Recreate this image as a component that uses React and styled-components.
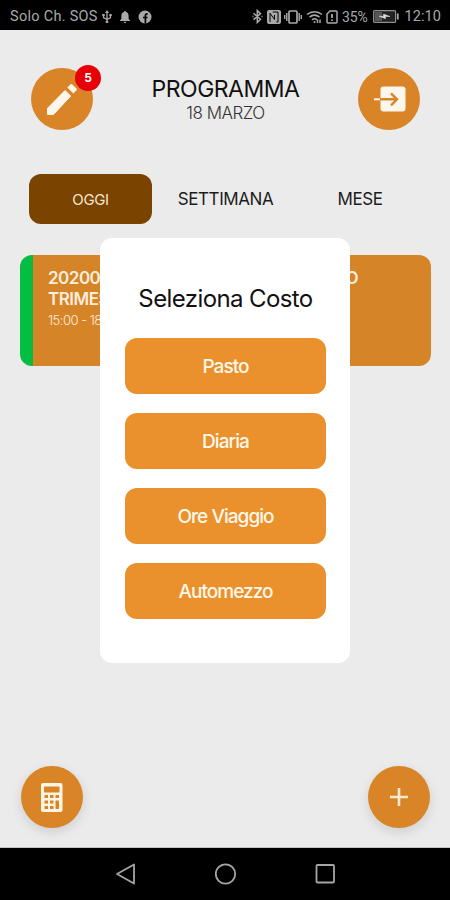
import React from "react";
import styled, { createGlobalStyle } from "styled-components";

const GlobalStyle = createGlobalStyle`
  * {
    box-sizing: border-box;
  }

  body {
    margin: 0;
    background: #000;
    font-family: "Inter", "Liberation Sans", sans-serif;
  }

  button {
    border: 0;
    padding: 0;
    font-family: inherit;
  }
`;

const Phone = styled.div`
  width: 450px;
  height: 900px;
  display: flex;
  flex-direction: column;
  overflow: hidden;
`;

const StatusBar = styled.div`
  flex: 0 0 30px;
  display: flex;
  align-items: center;
  justify-content: space-between;
  padding: 3px 9px 0 10px;
  background: #000;
  color: #a9a9a9;
  font-family: Roboto, sans-serif;
  font-size: 14.5px;
  line-height: 18px;
`;

const StatusGroup = styled.div`
  display: flex;
  align-items: center;

  svg {
    display: block;
    margin-right: ${(props) => props.$gap}px;
  }
`;

const Carrier = styled.span`
  margin-right: 4px;
  letter-spacing: 0.28px;
`;

const Battery = styled.span`
  width: 29px;
  margin-right: 2px;
  font-size: 14px;
  letter-spacing: -0.1px;
`;

const Clock = styled.span`
  margin-left: 2px;
  letter-spacing: 0.1px;
`;

const Screen = styled.main`
  position: relative;
  flex: 1;
  display: flex;
  flex-direction: column;
  border-bottom: 1px solid #c4c4c4;
  background: #ebebeb;
`;

const Header = styled.header`
  display: flex;
  justify-content: space-between;
  padding: 38px 30px 0 31px;
`;

const RoundButton = styled.button`
  position: relative;
  width: 62px;
  height: 62px;
  display: flex;
  align-items: center;
  justify-content: center;
  border-radius: 50%;
  background: #d88427;
  box-shadow: ${(props) =>
    props.$raised ? "0 4px 12px rgba(0, 0, 0, 0.12)" : "none"};
`;

const Badge = styled.span`
  position: absolute;
  top: -3px;
  right: -8px;
  width: 26px;
  height: 26px;
  border-radius: 50%;
  background: #e60008;
  color: #fff;
  font-size: 12px;
  font-weight: 700;
  line-height: 25px;
  text-align: center;
`;

const Heading = styled.div`
  padding-top: 8px;
  text-align: center;
`;

const Title = styled.h1`
  margin: 0;
  color: #111;
  font-size: 23px;
  font-weight: 400;
  line-height: 27px;
  letter-spacing: -0.5px;
`;

const Day = styled.p`
  margin: 0;
  color: #333;
  font-size: 17px;
  font-weight: 300;
  line-height: 21px;
  letter-spacing: -0.5px;
`;

const Tabs = styled.nav`
  display: flex;
  margin: 44px 29px 0;
`;

const Tab = styled.button`
  width: ${(props) => props.$width}px;
  height: 50px;
  border-radius: 12px;
  background: ${(props) => (props.$active ? "#7b4300" : "transparent")};
  color: ${(props) => (props.$active ? "#f6e7d3" : "#1c1c1c")};
  font-size: ${(props) => (props.$active ? 15 : 17)}px;
  letter-spacing: -0.4px;
`;

const EventCard = styled.article`
  height: 111px;
  margin: 31px 19px 0 20px;
  padding: 13px 73px 0 15px;
  border-left: 13px solid #06bd44;
  border-radius: 12px;
  background: #d68428;
  color: #fbeedd;
`;

const EventLine = styled.div`
  display: flex;
  justify-content: space-between;
  font-size: 17px;
  font-weight: 600;
  line-height: 21px;
  letter-spacing: -0.5px;
`;

const EventTime = styled.div`
  margin-top: 2px;
  font-size: 13px;
  font-weight: 300;
  line-height: 17px;
  letter-spacing: -0.5px;
`;

const Modal = styled.section`
  position: absolute;
  top: 208px;
  left: 100px;
  width: 250px;
  height: 425px;
  padding: 46px 24px 0 25px;
  border-radius: 12px;
  background: #fff;
`;

const ModalTitle = styled.h2`
  margin: 0 0 24px;
  color: #111;
  font-size: 24px;
  font-weight: 400;
  line-height: 30px;
  letter-spacing: -0.6px;
  text-align: center;
  white-space: nowrap;
`;

const Choices = styled.div`
  display: flex;
  flex-direction: column;
  gap: 19px;
`;

const Choice = styled.button`
  height: 56px;
  padding-top: 1px;
  border-radius: 12px;
  background: #ea912d;
  color: #fff8ea;
  font-size: 19px;
  font-weight: 500;
  letter-spacing: -0.95px;
`;

const Actions = styled.footer`
  display: flex;
  justify-content: space-between;
  margin-top: auto;
  padding: 0 20px 19px 21px;
`;

const NavBar = styled.div`
  flex: 0 0 52px;
  display: flex;
  justify-content: center;
  align-items: center;
  gap: 76px;
  background: #000;
`;

const UsbIcon = () => (
  <svg width="10" height="14" viewBox="0 0 10 14" fill="none" stroke="#a9a9a9">
    <path d="M5 2v10M1.5 5v2.5L5 9.5l3.5-2V5" strokeWidth="1.3" />
    <path d="M5 0l2 3H3zM.3 4h2.4v2H.3zM7.3 4h2.4v2H7.3zM3.7 11h2.6v2H3.7z" fill="#a9a9a9" stroke="none" />
  </svg>
);

const BellIcon = () => (
  <svg width="12" height="14" viewBox="0 0 12 14" fill="#a9a9a9">
    <path d="M6 1c.8 0 1 .5 1 1 2 .6 2.600 2.200 2.600 4v2.800L11 10.500V11H1v-.5l1.400-1.700V6C2.400 4.200 3 2.600 5 2c0-.5.2-1 1-1zM4.700 11.800h2.600c0 1.600-2.600 1.600-2.600 0z" />
  </svg>
);

const FacebookIcon = () => (
  <svg width="14" height="14" viewBox="0 0 14 14">
    <circle cx="7" cy="7" r="6.500" fill="#a9a9a9" />
    <path d="M7.400 13.500V5.500c0-1.400.8-1.700 2.300-1.500M5 7.500h4.500" fill="none" stroke="#000" strokeWidth="1.700" />
  </svg>
);

const BluetoothIcon = () => (
  <svg width="11" height="15" viewBox="0 0 11 15" fill="none" stroke="#a9a9a9" strokeWidth="1.500">
    <path d="M1.500 4.300l7 6L5.300 13.500v-12l3.200 3.100-7 6M.5 7.500h1M9.500 7.500h1" />
  </svg>
);

const NfcIcon = () => (
  <svg width="14" height="14" viewBox="0 0 14 14">
    <rect width="14" height="14" rx="2" fill="#a9a9a9" />
    <path d="M3 12V3.200l4.500 6.300V5M5.800 2H11v10H9.300" fill="none" stroke="#000" strokeWidth="1" />
  </svg>
);

const VibrateIcon = () => (
  <svg width="18" height="14" viewBox="0 0 18 14" fill="none" stroke="#a9a9a9">
    <rect x="5" y="1" width="8" height="12" rx="1" strokeWidth="1.700" />
    <path d="M2.800 3v8M.7 5v4M15.200 3v8M17.300 5v4" strokeWidth="1.400" />
  </svg>
);

const WifiIcon = () => (
  <svg width="17" height="14" viewBox="0 0 17 14" fill="none" stroke="#a9a9a9" strokeWidth="1.500">
    <path d="M1 4.500C5.500.8 11.500.8 16 4.500M3.500 7.200c3-2.500 7-2.500 10 0M6 9.800c1.500-1.200 3.500-1.200 5 0" />
    <circle cx="8.500" cy="12" r="1" fill="#a9a9a9" stroke="none" />
    <path d="M11.500 13V9.500M14 9.500V13" />
  </svg>
);

const SimIcon = () => (
  <svg width="12" height="14" viewBox="0 0 12 14" fill="none" stroke="#a9a9a9" strokeWidth="1.500">
    <path d="M4 1h6q1 0 1 1v10q0 1-1 1H2q-1 0-1-1V4z" />
    <path d="M6 4v4M6 9.500V11" strokeWidth="1.800" />
  </svg>
);

const BatteryIcon = () => (
  <svg width="26" height="13" viewBox="0 0 26 13">
    <rect x=".6" y=".6" width="22" height="11.800" rx="1" fill="#222" stroke="#8e8e8e" strokeWidth="1.200" />
    <rect x="2" y="2" width="7" height="9" fill="#555" />
    <path d="M6 6.200h4.500V4L17 6.500h-4.500v2.200z" fill="#ddd" stroke="#ddd" strokeWidth=".5" />
    <path d="M24.800 3.500v6" stroke="#a9a9a9" strokeWidth="1.800" />
  </svg>
);

const PencilIcon = () => (
  <svg width="62" height="62" viewBox="0 0 62 62" fill="#fdf6ec">
    <path d="M16.500 46.500v-6.200L34 22.500l5.700 5.500L22.500 46.500z" strokeLinejoin="round" stroke="#fdf6ec" strokeWidth="1" />
    <path d="M36.300 19.500l3-3q1-1 2 0l4 4q1 1 0 2l-3 3z" />
  </svg>
);

const ExitIcon = () => (
  <svg width="62" height="62" viewBox="0 0 62 62" fill="none">
    <rect x="22.500" y="18.500" width="25" height="25" rx="3" fill="#fdf6ec" />
    <path d="M16 31.300h7" stroke="#fdf6ec" strokeWidth="2" />
    <path d="M22 31.300h16M33 25.300l6 6-6 6" stroke="#d88427" strokeWidth="2.400" />
  </svg>
);

const CalculatorIcon = () => (
  <svg width="22" height="29" viewBox="0 0 22 29">
    <rect width="21.500" height="29" rx="2" fill="#fff5e3" />
    <g fill="#d88427">
      <rect x="3" y="3.500" width="15.500" height="6" rx=".8" />
      <rect x="3.500" y="12" width="3.500" height="3" />
      <rect x="9" y="12" width="3.500" height="3" />
      <rect x="14.500" y="12" width="3.500" height="3" />
      <rect x="3.500" y="17.500" width="3.500" height="3" />
      <rect x="9" y="17.500" width="3.500" height="3" />
      <rect x="14.500" y="17.500" width="3.500" height="8.500" rx=".7" />
      <rect x="3.500" y="23" width="3.500" height="3" />
      <rect x="9" y="23" width="3.500" height="3" />
    </g>
  </svg>
);

const PlusIcon = () => (
  <svg width="18" height="18" viewBox="0 0 18 18" stroke="#fdebd0" strokeWidth="2.600">
    <path d="M9 0v18M0 9h18" />
  </svg>
);

const BackIcon = () => (
  <svg width="24" height="24" viewBox="0 0 24 24" fill="none" stroke="#a5a5a5" strokeWidth="1.800" strokeLinejoin="round">
    <path d="M4 12L21 2.500v19z" />
  </svg>
);

const HomeIcon = () => (
  <svg width="24" height="24" viewBox="0 0 24 24" fill="none" stroke="#a5a5a5" strokeWidth="1.800">
    <circle cx="12.500" cy="12" r="9.700" />
  </svg>
);

const RecentsIcon = () => (
  <svg width="24" height="24" viewBox="0 0 24 24" fill="none" stroke="#a5a5a5" strokeWidth="1.800">
    <rect x="3.500" y="3" width="17.500" height="17.500" rx="1" />
  </svg>
);

const tabs = [
  { label: "OGGI", width: 123, active: true },
  { label: "SETTIMANA", width: 147 },
  { label: "MESE", width: 122 },
];

const costs = ["Pasto", "Diaria", "Ore Viaggio", "Automezzo"];

const App = () => (
  <>
    <GlobalStyle />
    <Phone>
      <StatusBar>
        <StatusGroup $gap={7}>
          <Carrier>Solo Ch. SOS</Carrier>
          <UsbIcon />
          <BellIcon />
          <FacebookIcon />
        </StatusGroup>
        <StatusGroup $gap={3.5}>
          <BluetoothIcon />
          <NfcIcon />
          <VibrateIcon />
          <WifiIcon />
          <SimIcon />
          <Battery>35%</Battery>
          <BatteryIcon />
          <Clock>12:10</Clock>
        </StatusGroup>
      </StatusBar>

      <Screen>
        <Header>
          <RoundButton>
            <PencilIcon />
            <Badge>5</Badge>
          </RoundButton>
          <Heading>
            <Title>PROGRAMMA</Title>
            <Day>18 MARZO</Day>
          </Heading>
          <RoundButton>
            <ExitIcon />
          </RoundButton>
        </Header>

        <Tabs>
          {tabs.map((tab) => (
            <Tab key={tab.label} $width={tab.width} $active={tab.active}>
              {tab.label}
            </Tab>
          ))}
        </Tabs>

        <EventCard>
          <EventLine>
            <span>20200</span>
            <span>O</span>
          </EventLine>
          <EventLine>TRIMES</EventLine>
          <EventTime>15:00 - 18</EventTime>
        </EventCard>

        <Actions>
          <RoundButton $raised>
            <CalculatorIcon />
          </RoundButton>
          <RoundButton $raised>
            <PlusIcon />
          </RoundButton>
        </Actions>

        <Modal>
          <ModalTitle>Seleziona Costo</ModalTitle>
          <Choices>
            {costs.map((cost) => (
              <Choice key={cost}>{cost}</Choice>
            ))}
          </Choices>
        </Modal>
      </Screen>

      <NavBar>
        <BackIcon />
        <HomeIcon />
        <RecentsIcon />
      </NavBar>
    </Phone>
  </>
);

export default App;
